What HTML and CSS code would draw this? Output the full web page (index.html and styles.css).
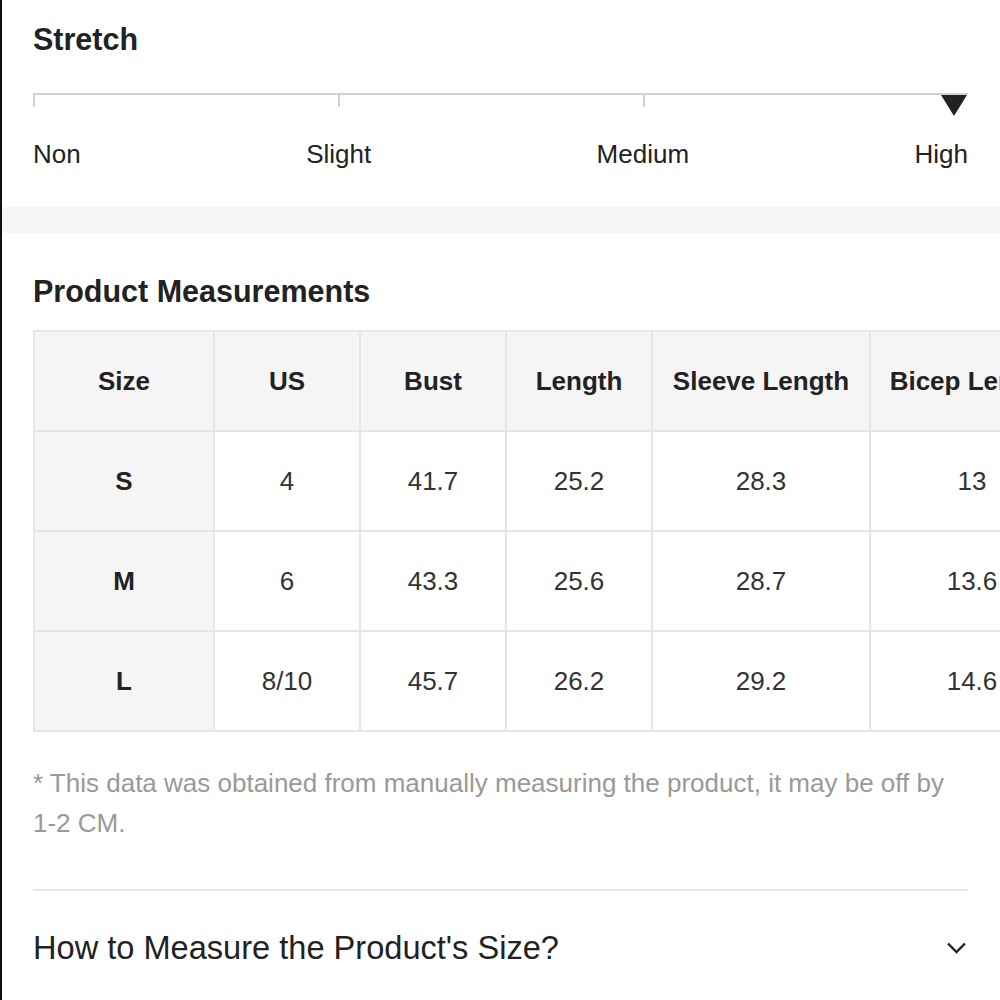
FILE: index.html
```html
<!DOCTYPE html>
<html lang="en">
<head>
  <meta charset="UTF-8">
  <meta name="viewport" content="width=device-width, initial-scale=1.0">
  <title>Product Size</title>
  <link rel="stylesheet" href="styles.css">
</head>
<body>
  <section class="stretch">
    <h2 class="title">Stretch</h2>
    <div class="track">
      <span class="tick"></span>
      <span class="tick"></span>
      <span class="tick"></span>
      <span class="marker"></span>
    </div>
    <div class="labels">
      <span>Non</span>
      <span>Slight</span>
      <span>Medium</span>
      <span>High</span>
    </div>
  </section>

  <div class="band"></div>

  <section class="measure">
    <h2 class="title">Product Measurements</h2>
    <div class="table-wrap">
      <table class="sizes">
        <tr>
          <th class="c-size">Size</th>
          <th class="c-num">US</th>
          <th class="c-num">Bust</th>
          <th class="c-num">Length</th>
          <th class="c-wide">Sleeve Length</th>
          <th class="c-bicep">Bicep Length</th>
        </tr>
        <tr>
          <th>S</th>
          <td>4</td>
          <td>41.7</td>
          <td>25.2</td>
          <td>28.3</td>
          <td>13</td>
        </tr>
        <tr>
          <th>M</th>
          <td>6</td>
          <td>43.3</td>
          <td>25.6</td>
          <td>28.7</td>
          <td>13.6</td>
        </tr>
        <tr>
          <th>L</th>
          <td>8/10</td>
          <td>45.7</td>
          <td>26.2</td>
          <td>29.2</td>
          <td>14.6</td>
        </tr>
      </table>
    </div>
    <p class="note">* This data was obtained from manually measuring the product, it may be off by 1-2 CM.</p>

    <div class="how">
      <span>How to Measure the Product's Size?</span>
      <svg class="chev" width="24" height="24" viewBox="0 0 24 24">
        <path d="M3 7.5 L11.5 16 L20 7.5" fill="none" stroke="#222" stroke-width="2.4"/>
      </svg>
    </div>
  </section>
</body>
</html>
```

FILE: styles.css
```css
*{
  margin:0;
  padding:0;
  box-sizing: border-box;
}
body{
  font-family: "Liberation Sans", Arial, sans-serif;
  color:#333;
  background:#fff;
  border-left:2px solid #111;
  min-height:100vh;
  overflow:hidden;
}
.title{
  font-size:30.5px;
  line-height:34px;
  font-weight:bold;
  color:#222;
}

/* stretch scale */
.stretch{
  padding:22px 32px 38px 31px;
}
.track{
  position: relative;
  margin-top:37px;
  height:14px;
  padding-right:20px;
  border-top:2px solid #d2d2d2;
  display:grid;
  grid-template-columns: repeat(3, 1fr);
}
.tick{
  border-left:2px solid #d2d2d2;
}
.marker{
  position:absolute;
  right:1px;
  top:0;
  width:0;
  height:0;
  border-left:13.5px solid transparent;
  border-right:13.5px solid transparent;
  border-top:21px solid #222;
}
.labels{
  margin-top:32px;
  display:flex;
  justify-content: space-between;
  font-size:26px;
  line-height:30px;
  color:#222;
}

.band{
  height:26px;
  background:#f5f5f5;
}

/* measurements */
.measure{
  padding:41px 32px 0 31px;
}
.table-wrap{
  margin-top:22px;
  margin-right:-32px;
  overflow:hidden;
}
.sizes{
  table-layout: fixed;
  width:1042px;
  border-collapse: separate;
  border-spacing:0;
  border-top:2px solid #e6e6e6;
  border-left:2px solid #e6e6e6;
  font-size:26px;
}
.sizes th,
.sizes td{
  height:100px;
  padding:0;
  text-align:center;
  vertical-align: middle;
  border-right:2px solid #e6e6e6;
  border-bottom:2px solid #e6e6e6;
  white-space:nowrap;
}
.sizes th{
  background:#f5f5f5;
  color:#222;
  font-weight:bold;
}
.sizes td{
  background:#fff;
  color:#333;
  font-weight:normal;
}
.c-size{ width:180px; }
.c-num{ width:146px; }
.c-wide{ width:218px; }
.c-bicep{ width:204px; }

.note{
  margin-top:31px;
  font-size:26px;
  line-height:40px;
  color:#999;
}

.how{
  margin-top:46px;
  border-top:2px solid #e8e8e8;
  padding-top:37px;
  display:flex;
  justify-content: space-between;
  align-items:center;
  font-size:32.6px;
  line-height:40px;
  color:#222;
}
.chev{
  margin-right:-1px;
}
```
